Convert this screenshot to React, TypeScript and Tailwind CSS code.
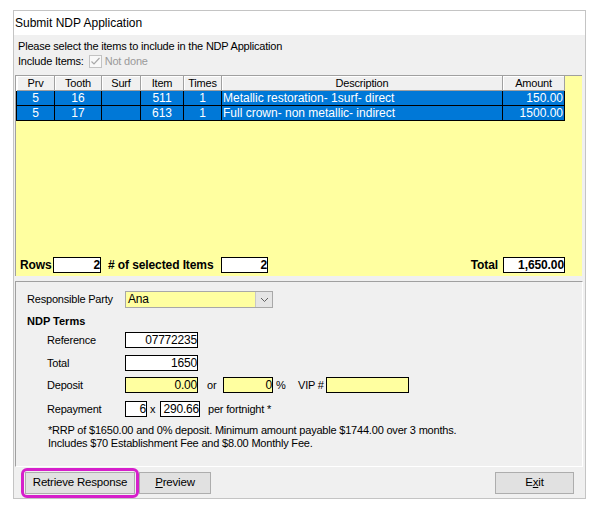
import React from 'react';

const columns = [
  { label: 'Prv', w: 'w-[38px]' },
  { label: 'Tooth', w: 'w-[47px]' },
  { label: 'Surf', w: 'w-[39px]' },
  { label: 'Item', w: 'w-[43px]' },
  { label: 'Times', w: 'w-[38px]' },
  { label: 'Description', w: 'w-[281px]' },
  { label: 'Amount', w: 'w-[62px]' },
];

const items = [
  { prv: '5', tooth: '16', surf: '', item: '511', times: '1', desc: 'Metallic restoration- 1surf- direct', amount: '150.00' },
  { prv: '5', tooth: '17', surf: '', item: '613', times: '1', desc: 'Full crown- non metallic- indirect', amount: '1500.00' },
];

function Box({ value, w, yellow, bold }: { value: string; w: string; yellow?: boolean; bold?: boolean }) {
  return (
    <div
      className={`${w} h-[16px] border border-black text-right text-[12px] leading-[14px] ${
        yellow ? 'bg-[#ffffa0]' : 'bg-white'
      } ${bold ? 'font-bold' : ''}`}
    >
      {value}
    </div>
  );
}

function Button({ children, w }: { children: React.ReactNode; w: string }) {
  return (
    <div
      className={`${w} h-[22px] border border-[#adadad] bg-[#e1e1e1] flex items-center justify-center text-[11.5px] tracking-[-0.2px] text-black`}
    >
      {children}
    </div>
  );
}

export default function App() {
  return (
    <div
      className="w-[599px] h-[515px] bg-white pt-[10px] pl-[13px] text-black"
      style={{ fontFamily: '"Liberation Sans", Arial, sans-serif' }}
    >
      <div className="w-[573px] h-[489px] border border-[#c4c4c4] bg-[#f0f0f0] flex flex-col">
        {/* Title */}
        <div className="h-[24px] bg-white flex items-center pl-[1px] text-[12px]">Submit NDP Application</div>

        {/* Intro */}
        <div className="pl-[4px] pt-[4px] text-[11px] leading-[14px] tracking-[-0.2px]">
          Please select the items to include in the NDP Application
        </div>
        <div className="mt-[1px] pl-[4px] h-[14px] flex items-center text-[11px] tracking-[-0.2px]">
          <span>Include Items:</span>
          <div className="ml-[5px] w-[13px] h-[13px] border border-[#c2c2c2] bg-[#f8f8f8] flex items-center justify-center">
            <svg width="11" height="11" viewBox="0 0 11 11">
              <path d="M1.5 5.5 L4 8 L9.5 2" fill="none" stroke="#a8a8a8" strokeWidth="1.2" />
            </svg>
          </div>
          <span className="ml-[3px] text-[#9a9a9a]">Not done</span>
        </div>

        {/* Grid */}
        <div className="mt-[7px] ml-[1px] mr-[3px] h-[201px] border-l border-t border-[#a0a0a0] bg-[#ffffa0] flex flex-col">
          <div className="flex border-l border-white">
            {columns.map((c) => (
              <div
                key={c.label}
                className={`${c.w} h-[15px] bg-[#f0f0f0] border-r border-b border-[#a0a0a0] shadow-[inset_1px_1px_0_#ffffff] flex items-center justify-center text-[11px] tracking-[-0.2px]`}
              >
                {c.label}
              </div>
            ))}
          </div>
          {items.map((r) => (
            <div key={r.item} className="flex border-l border-black text-white text-[12px] leading-[14px]">
              <div className="w-[38px] h-[15px] bg-[#0078d7] border-r border-b border-black text-center">{r.prv}</div>
              <div className="w-[47px] h-[15px] bg-[#0078d7] border-r border-b border-black text-center">{r.tooth}</div>
              <div className="w-[39px] h-[15px] bg-[#0078d7] border-r border-b border-black text-center">{r.surf}</div>
              <div className="w-[43px] h-[15px] bg-[#0078d7] border-r border-b border-black text-center">{r.item}</div>
              <div className="w-[38px] h-[15px] bg-[#0078d7] border-r border-b border-black text-center">{r.times}</div>
              <div className="w-[281px] h-[15px] bg-[#0078d7] border-r border-b border-black pl-[1px]">{r.desc}</div>
              <div className="w-[62px] h-[15px] bg-[#0078d7] border-r border-b border-black text-right pr-[1px]">
                {r.amount}
              </div>
            </div>
          ))}
          <div className="flex-1" />
          <div className="flex items-center pl-[4px] mb-[2px] text-[12px] font-bold tracking-[-0.1px]">
            <span className="w-[33px]">Rows</span>
            <Box value="2" w="w-[48px]" bold />
            <span className="ml-[7px] w-[113px]"># of selected Items</span>
            <Box value="2" w="w-[47px]" bold />
            <div className="flex-1" />
            <span className="mr-[5px]">Total</span>
            <Box value="1,650.00" w="w-[62px]" bold />
            <div className="w-[17px]" />
          </div>
        </div>

        {/* Terms panel */}
        <div className="mt-[5px] ml-[1px] mr-[2px] h-[186px] border-l border-t border-[#a0a0a0] border-r border-b border-r-white border-b-white flex flex-col text-[11px] tracking-[-0.2px]">
          <div className="mt-[9px] pl-[11px] flex items-center">
            <span className="w-[98px]">Responsible Party</span>
            <div className="w-[148px] h-[17px] border border-[#a8a8a8] bg-[#ffffa0] flex">
              <span className="flex-1 pl-[2px] text-[12px] leading-[15px]">Ana</span>
              <div className="w-[17px] h-full bg-[#e5e5e5] border-l border-[#c8c8c8] flex items-center justify-center">
                <svg width="9" height="6" viewBox="0 0 9 6">
                  <path d="M1 1 L4.5 4.5 L8 1" fill="none" stroke="#606060" strokeWidth="1" />
                </svg>
              </div>
            </div>
          </div>

          <div className="mt-[6px] pl-[11px] leading-[14px] font-bold tracking-[0px]">NDP Terms</div>

          <div className="mt-[4px] pl-[31px] flex items-center">
            <span className="w-[78px]">Reference</span>
            <Box value="07772235" w="w-[73px]" />
          </div>
          <div className="mt-[6px] pl-[31px] flex items-center">
            <span className="w-[78px]">Total</span>
            <Box value="1650" w="w-[73px]" />
          </div>
          <div className="mt-[6px] pl-[31px] flex items-center">
            <span className="w-[78px]">Deposit</span>
            <Box value="0.00" w="w-[73px]" yellow />
            <span className="ml-[9px] w-[16px]">or</span>
            <Box value="0" w="w-[50px]" yellow />
            <span className="ml-[3px] w-[22px]">%</span>
            <span className="w-[28px]">VIP #</span>
            <Box value="" w="w-[83px]" yellow />
          </div>
          <div className="mt-[7px] pl-[31px] flex items-center">
            <span className="w-[78px]">Repayment</span>
            <Box value="6" w="w-[22px]" />
            <span className="ml-[3px] w-[10px]">x</span>
            <Box value="290.66" w="w-[40px]" />
            <span className="ml-[8px]">per fortnight *</span>
          </div>

          <div className="mt-[7px] pl-[32px] leading-[13px]">
            <div>*RRP of $1650.00 and 0% deposit. Minimum amount payable $1744.00 over 3 months.</div>
            <div>Includes $70 Establishment Fee and $8.00 Monthly Fee.</div>
          </div>
        </div>

        {/* Buttons */}
        <div className="flex items-start pl-[7px] pr-[11px]">
          <div className="mt-[1px] p-[1px] border-[3px] border-[#d61fcb] rounded-[6px]">
            <Button w="w-[110px]">Retrieve Response</Button>
          </div>
          <div className="mt-[5px]">
            <Button w="w-[72px]">
              <span>
                <span className="underline">P</span>review
              </span>
            </Button>
          </div>
          <div className="flex-1" />
          <div className="mt-[5px]">
            <Button w="w-[79px]">
              <span>
                E<span className="underline">x</span>it
              </span>
            </Button>
          </div>
        </div>
      </div>
    </div>
  );
}
